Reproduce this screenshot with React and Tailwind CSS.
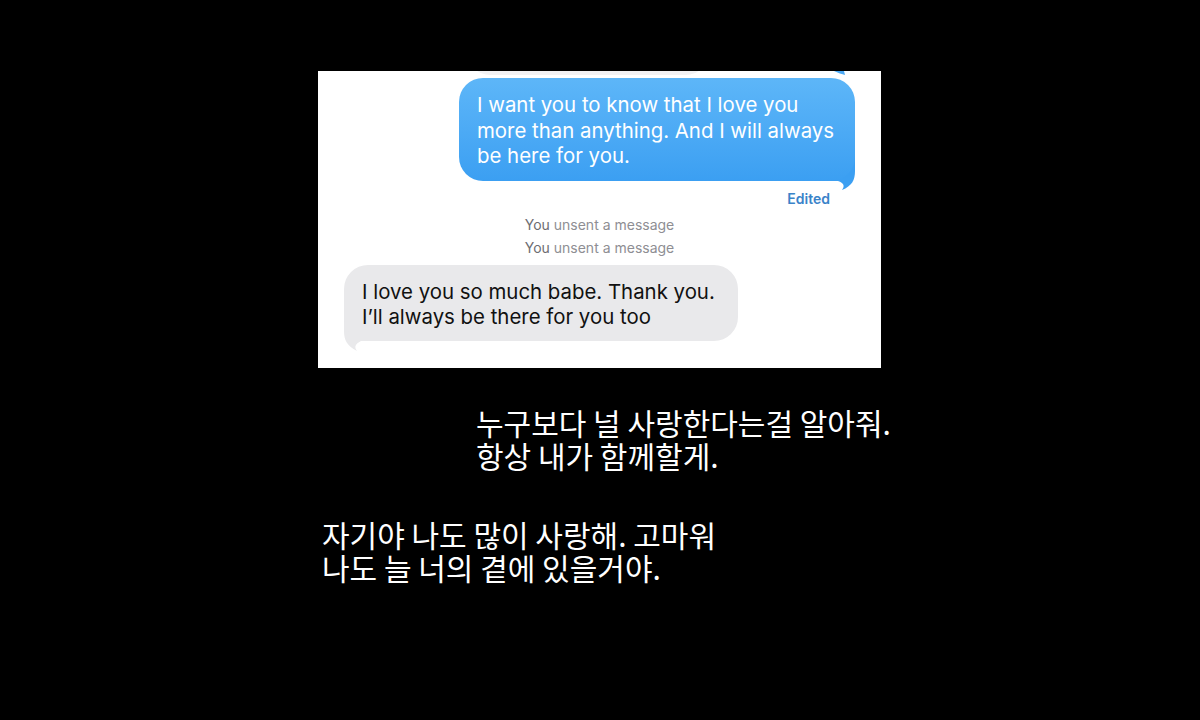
import React from "react";

const en = { fontFamily: '"Inter", "Liberation Sans", sans-serif' };
const ko = { fontFamily: '"Noto Sans CJK KR", "Noto Sans", sans-serif' };

export default function App() {
  return (
    <div className="w-[1200px] h-[720px] bg-black overflow-hidden flex flex-col">
      <div className="pt-[71px] pl-[318px]">
        <div className="relative w-[563px] h-[297px] bg-white overflow-hidden flex flex-col" style={en}>
          {/* faint previous bubble edge */}
          <div className="absolute left-[150px] top-[-40px] w-[240px] h-[44px] rounded-[22px] bg-[#f2f2f4]" />
          <svg className="absolute left-[512px] top-0" width="16" height="6" viewBox="0 0 16 6">
            <path d="M4 0 C8 2 12 3 15 4 L14 0 Z" fill="#4aa8f4" />
          </svg>

          {/* blue bubble */}
          <div className="mt-[7px] ml-[141px] relative w-[396px]">
            <svg className="absolute left-[368px] top-[77px]" width="30" height="40" viewBox="0 0 30 40">
              <path d="M0 26 L0 0 L28 0 L28 16 C28 25 25 31 15 35 C18 31 17 28 11 26 Z" fill="#3b9ff2" />
            </svg>
            <div className="relative h-[103px] rounded-[24px] bg-gradient-to-b from-[#5db6f8] to-[#3b9ff2] pl-[18px] pt-[14px] text-white text-[20.4px] leading-[25.5px]">
              <div>I want you to know that I love you</div>
              <div>more than anything. And I will always</div>
              <div>be here for you.</div>
            </div>
          </div>

          <div className="mt-[10px] mr-[51px] self-end text-[14px] leading-[16px] font-semibold text-[#3a83c9]">Edited</div>

          <div className="mt-[6px] flex flex-col items-center text-[14px] leading-[23px] text-[#8e8e93]">
            <div><span className="text-[#6d6d72]">You</span> unsent a message</div>
            <div><span className="text-[#6d6d72]">You</span> unsent a message</div>
          </div>

          {/* gray bubble */}
          <div className="mt-[6px] ml-[26px] relative w-[394px]">
            <svg className="absolute left-[-2px] top-[50px]" width="30" height="40" viewBox="0 0 30 40">
              <path d="M30 26 L30 0 L2 0 L2 16 C2 25 5 31 15 36 C12 32 13 29 19 26 Z" fill="#e9e9eb" />
            </svg>
            <div className="relative h-[76px] rounded-[24px] bg-[#e9e9eb] pl-[18px] pt-[14px] text-[#111] text-[20.4px] leading-[25px]">
              <div>I love you so much babe. Thank you.</div>
              <div>I’ll always be there for you too</div>
            </div>
          </div>
        </div>
      </div>

      <div className="mt-[38px] ml-[476px] text-white text-[30px] leading-[33px]" style={ko}>
        <div className="whitespace-nowrap">누구보다 널 사랑한다는걸 알아줘.</div>
        <div className="whitespace-nowrap">항상 내가 함께할게.</div>
      </div>

      <div className="mt-[46px] ml-[322px] text-white text-[30px] leading-[33px]" style={ko}>
        <div className="whitespace-nowrap">자기야 나도 많이 사랑해. 고마워</div>
        <div className="whitespace-nowrap">나도 늘 너의 곁에 있을거야.</div>
      </div>
    </div>
  );
}
